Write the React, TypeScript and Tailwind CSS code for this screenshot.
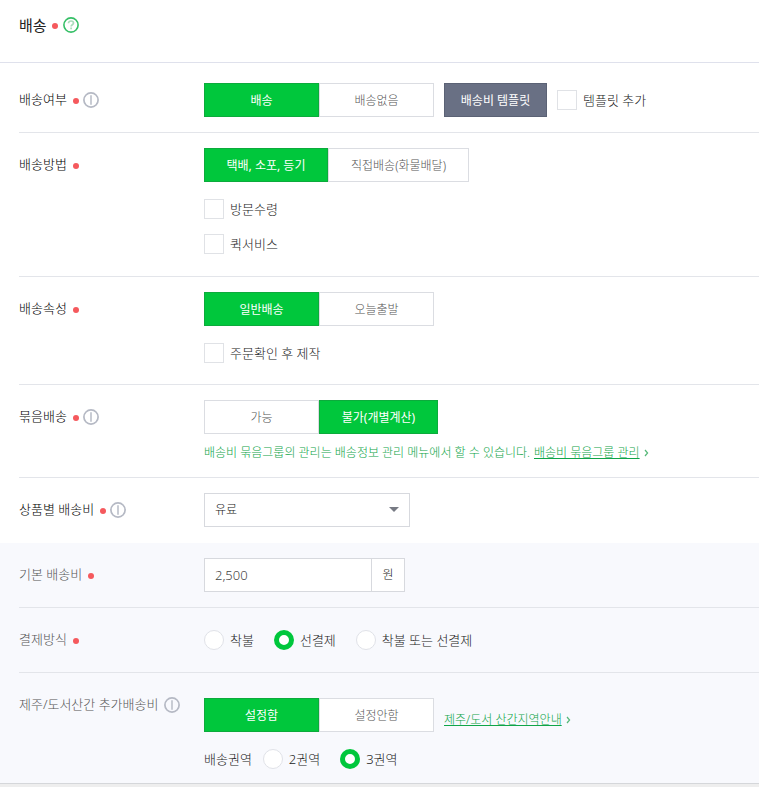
import { useState } from 'react'
import type { ReactNode } from 'react'
import clsx from 'clsx'

type Option = { label: string; width: string }

function RequiredDot() {
  return <span className="mt-[2px] size-[6px] shrink-0 rounded-full bg-[#f5595d]" />
}

function InfoIcon() {
  return (
    <svg width="16" height="16" viewBox="0 0 16 16" fill="none" className="shrink-0">
      <circle cx="8" cy="8" r="7.1" stroke="#b5b9c4" strokeWidth="1.7" />
      <path d="M8 3.2v9.6" stroke="#c3c7d0" strokeWidth="1.8" />
    </svg>
  )
}

function HelpIcon() {
  return (
    <svg width="16" height="16" viewBox="0 0 16 16" fill="none" className="shrink-0">
      <circle cx="8" cy="8" r="7.1" stroke="#35bf66" strokeWidth="1.6" />
      <path
        d="M5.5 6.3C5.5 4.8 6.6 4 8 4s2.5.8 2.5 2.1c0 1.6-2.4 1.7-2.4 3.4M8.1 10.6v1.7"
        stroke="#a9dcbb"
        strokeWidth="1.7"
      />
    </svg>
  )
}

function Chevron() {
  return (
    <svg width="5" height="8" viewBox="0 0 5 8" fill="none" className="shrink-0">
      <path d="M1 1l2.6 3L1 7" stroke="#55b878" strokeWidth="1.2" />
    </svg>
  )
}

type RowProps = {
  label: string
  htmlFor?: string
  required?: boolean
  info?: boolean
  className?: string
  labelClassName?: string
  children: ReactNode
}

function Row({ label, htmlFor, required, info, className, labelClassName, children }: RowProps) {
  return (
    <div className={clsx('ml-[19px] flex border-[#e3e5ea]', className)}>
      <div className={clsx('flex h-[34px] w-[185px] shrink-0 items-center', labelClassName)}>
        {htmlFor ? (
          <label htmlFor={htmlFor} className="pb-[2px]">
            {label}
          </label>
        ) : (
          <span className="pb-[2px]">{label}</span>
        )}
        <span className="ml-[6px] flex items-center gap-1">
          {required && <RequiredDot />}
          {info && <InfoIcon />}
        </span>
      </div>
      <div className="min-w-0 flex-1">{children}</div>
    </div>
  )
}

function Segment({ options, initial = 0 }: { options: Option[]; initial?: number }) {
  const [selected, setSelected] = useState(initial)

  return (
    <div className="flex">
      {options.map((option, i) => (
        <button
          key={option.label}
          type="button"
          aria-pressed={selected === i}
          onClick={() => setSelected(i)}
          className={clsx(
            'h-[34px] border pt-[2px] text-xs whitespace-nowrap',
            option.width,
            selected === i
              ? 'border-[#0cab3c] bg-[#00c73c] font-normal text-white'
              : 'border-[#dbdde2] bg-white text-[#555555]'
          )}
        >
          {option.label}
        </button>
      ))}
    </div>
  )
}

function Checkbox({ label }: { label: string }) {
  return (
    <label className="flex h-5 items-center gap-[6px]">
      <input
        type="checkbox"
        className="size-5 appearance-none border border-[#e0e2e6] bg-white checked:bg-[#00c73c]"
      />
      {label}
    </label>
  )
}

function Radio({ name, label, checked }: { name: string; label: string; checked?: boolean }) {
  return (
    <label className="flex h-5 items-center gap-[6px]">
      <input
        type="radio"
        name={name}
        defaultChecked={checked}
        className="size-5 appearance-none rounded-full border border-[#e0e2e8] bg-white checked:border-[5px] checked:border-[#00c73c]"
      />
      {label}
    </label>
  )
}

function TextLink({ children }: { children: ReactNode }) {
  return (
    <a href="#" className="flex items-center gap-1 text-xs leading-6 text-[#0fa548]">
      <span className="underline underline-offset-1">{children}</span>
      <Chevron />
    </a>
  )
}

export default function App() {
  return (
    <div className="min-h-screen bg-[#eeeeee] font-['Noto_Sans','Noto_Sans_CJK_KR',sans-serif] text-[13px] leading-5 font-light text-[#222222]">
      <form className="border-b border-[#d5d7da] bg-white">
        <header className="flex h-[63px] border-b border-[#dfe1ec] px-[19px] pt-[15px]">
          <div className="flex h-5 items-center gap-[5px]">
            <h1 className="text-[15px] font-normal text-[#222222]">배송</h1>
            <RequiredDot />
            <HelpIcon />
          </div>
        </header>

        <Row label="배송여부" required info className="border-b pt-5 pb-[15px]" labelClassName="text-black">
          <div className="flex items-center gap-[10px]">
            <Segment
              options={[
                { label: '배송', width: 'w-[115px]' },
                { label: '배송없음', width: 'w-[115px]' },
              ]}
            />
            <button
              type="button"
              className="h-[34px] w-[103px] border border-[#5b6275] bg-[#697084] pt-[2px] text-xs font-normal text-white"
            >
              배송비 템플릿
            </button>
            <Checkbox label="템플릿 추가" />
          </div>
        </Row>

        <Row label="배송방법" required className="border-b pt-[15px] pb-[22px]" labelClassName="text-black">
          <Segment
            options={[
              { label: '택배, 소포, 등기', width: 'w-[124px]' },
              { label: '직접배송(화물배달)', width: 'w-[141px]' },
            ]}
          />
          <div className="mt-[17px] flex flex-col items-start gap-[15px]">
            <Checkbox label="방문수령" />
            <Checkbox label="퀵서비스" />
          </div>
        </Row>

        <Row label="배송속성" required className="border-b pt-[15px] pb-[21px]" labelClassName="text-black">
          <Segment
            options={[
              { label: '일반배송', width: 'w-[115px]' },
              { label: '오늘출발', width: 'w-[115px]' },
            ]}
          />
          <div className="mt-[17px] flex">
            <Checkbox label="주문확인 후 제작" />
          </div>
        </Row>

        <Row label="묶음배송" required info className="border-b pt-[15px] pb-3" labelClassName="text-black">
          <Segment
            initial={1}
            options={[
              { label: '가능', width: 'w-[115px]' },
              { label: '불가(개별계산)', width: 'w-[119px]' },
            ]}
          />
          <div className="mt-[7px] flex flex-wrap items-center gap-x-1 text-xs leading-6 text-[#0fa548]">
            <p>배송비 묶음그룹의 관리는 배송정보 관리 메뉴에서 할 수 있습니다.</p>
            <TextLink>배송비 묶음그룹 관리</TextLink>
          </div>
        </Row>

        <Row label="상품별 배송비" htmlFor="fee-type" required info className="pt-[15px] pb-4" labelClassName="text-black">
          <div className="relative w-[206px]">
            <select
              id="fee-type"
              className="block h-[34px] w-full appearance-none border border-[#d7d9de] bg-white px-[10px] text-xs text-[#222222]"
            >
              <option>유료</option>
              <option>무료</option>
            </select>
            <svg width="10" height="5" viewBox="0 0 10 5" className="pointer-events-none absolute top-[14px] right-[11px]">
              <path d="M0 0h10L5 5z" fill="#777a83" />
            </svg>
          </div>
        </Row>

        <section className="bg-[#f8f9fd]">
          <Row label="기본 배송비" htmlFor="base-fee" required className="border-b py-[15px]" labelClassName="text-[#555555]">
            <div className="flex h-[34px] w-[201px] border border-[#d7d9de] bg-white">
              <input
                id="base-fee"
                type="text"
                defaultValue="2,500"
                className="min-w-0 flex-1 px-[10px] text-[13px] text-[#444444]"
              />
              <span className="flex w-[33px] items-center justify-center border-l border-[#d7d9de] text-xs">원</span>
            </div>
          </Row>

          <Row label="결제방식" required className="border-b py-[15px]" labelClassName="text-[#555555]">
            <div className="flex h-[34px] items-center gap-5">
              <Radio name="payment" label="착불" />
              <Radio name="payment" label="선결제" checked />
              <Radio name="payment" label="착불 또는 선결제" />
            </div>
          </Row>

          <Row label="제주/도서산간 추가배송비" info className="pt-[15px] pb-[14px]" labelClassName="text-[#555555]">
            <div className="flex items-end gap-[10px] pt-[10px]">
              <Segment
                options={[
                  { label: '설정함', width: 'w-[115px]' },
                  { label: '설정안함', width: 'w-[115px]' },
                ]}
              />
              <TextLink>제주/도서 산간지역안내</TextLink>
            </div>
            <div className="mt-[17px] flex items-center">
              <span className="mr-[11px]">배송권역</span>
              <div className="flex gap-5">
                <Radio name="zone" label="2권역" />
                <Radio name="zone" label="3권역" checked />
              </div>
            </div>
          </Row>
        </section>
      </form>
    </div>
  )
}
